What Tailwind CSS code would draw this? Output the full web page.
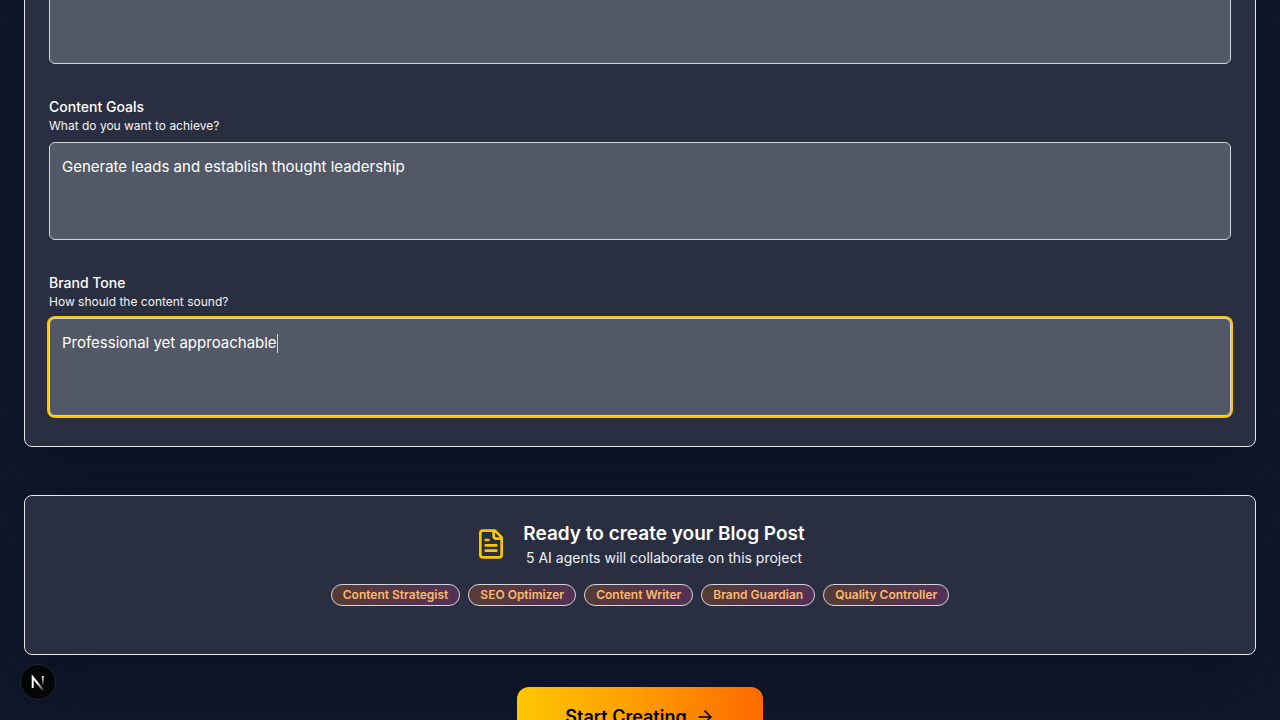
<!DOCTYPE html>
<html lang="en">
<head>
<meta charset="utf-8">
<meta name="viewport" content="width=device-width, initial-scale=1">
<title>Create content</title>
<script src="https://cdn.jsdelivr.net/npm/@tailwindcss/browser@4"></script>
</head>
<body class="bg-[#0e182a] font-['Inter',sans-serif] text-white">
<div class="relative h-screen overflow-hidden">
  <main class="-mt-16 px-6">
    <section class="flex flex-col gap-8 rounded-lg border border-gray-200 bg-[#292e40] px-6 pt-[29px] pb-[30px] shadow-2xl shadow-[#0d1024]" aria-label="Content details">
      <textarea aria-label="Target Audience" class="block h-[98px] w-full resize-none rounded-md border border-gray-300 bg-[#525865] px-3 py-3 text-base outline-none"></textarea>
      <div class="flex flex-col">
        <label for="goals" class="text-sm font-medium leading-[22px]">Content Goals</label>
        <p class="mb-2 text-xs leading-4 text-gray-100">What do you want to achieve?</p>
        <textarea id="goals" class="block h-[98px] w-full resize-none rounded-md border border-gray-300 bg-[#525865] px-3 py-3 text-[15px] leading-6 outline-none">Generate leads and establish thought leadership</textarea>
      </div>
      <div class="flex flex-col">
        <label for="tone" class="text-sm font-medium leading-[22px]">Brand Tone</label>
        <p class="mb-2 text-xs leading-4 text-gray-100">How should the content sound?</p>
        <div class="relative">
          <textarea id="tone" class="block h-[98px] w-full resize-none rounded-md border border-gray-300 bg-[#525865] px-3 py-3 text-[15px] leading-6 caret-transparent ring-2 ring-[#fdc700] outline-none">Professional yet approachable</textarea>
          <div class="pointer-events-none absolute top-[13px] left-[13px] flex h-6 items-center text-[15px] leading-6" aria-hidden="true"><span class="invisible">Professional yet approachable</span><span class="h-[19px] w-px bg-gray-300"></span></div>
        </div>
      </div>
    </section>

    <section class="mt-12 rounded-lg border border-gray-200 bg-[#292e40] px-6 pt-6 pb-12 shadow-2xl shadow-[#0d1024]">
      <div class="flex items-center justify-center gap-4">
        <svg class="size-8 text-[#fdc700]" viewBox="0 0 24 24" fill="none" stroke="currentColor" stroke-width="2" stroke-linecap="round" stroke-linejoin="round" aria-hidden="true"><path d="M15 2H6a2 2 0 0 0-2 2v16a2 2 0 0 0 2 2h12a2 2 0 0 0 2-2V7Z"/><path d="M14 2v4a2 2 0 0 0 2 2h4"/><path d="M10 9H8"/><path d="M16 13H8"/><path d="M16 17H8"/></svg>
        <div class="text-center">
          <h2 class="text-[19px] font-semibold leading-7">Ready to create your Blog Post</h2>
          <p class="text-sm leading-5 text-gray-100">5 AI agents will collaborate on this project</p>
        </div>
      </div>
      <ul class="mt-4 flex flex-wrap justify-center gap-2 text-xs font-semibold leading-4 text-[#ffb86a]">
        <li class="rounded-full border border-gray-300 bg-linear-to-r from-[#573b36] to-[#533156] px-[11px] py-0.5">Content Strategist</li>
        <li class="rounded-full border border-gray-300 bg-linear-to-r from-[#573b36] to-[#533156] px-[11px] py-0.5">SEO Optimizer</li>
        <li class="rounded-full border border-gray-300 bg-linear-to-r from-[#573b36] to-[#533156] px-[11px] py-0.5">Content Writer</li>
        <li class="rounded-full border border-gray-300 bg-linear-to-r from-[#573b36] to-[#533156] px-[11px] py-0.5">Brand Guardian</li>
        <li class="rounded-full border border-gray-300 bg-linear-to-r from-[#573b36] to-[#533156] px-[11px] py-0.5">Quality Controller</li>
      </ul>
    </section>

    <div class="mt-8 flex justify-center">
      <button type="button" class="flex h-15 items-center gap-2 rounded-xl bg-linear-to-r from-[#fdc700] to-[#ff6900] px-12 text-lg font-semibold text-black">Start Creating
        <svg class="size-5" viewBox="0 0 24 24" fill="none" stroke="currentColor" stroke-width="2" stroke-linecap="round" stroke-linejoin="round" aria-hidden="true"><path d="M5 12h14"/><path d="m12 5 7 7-7 7"/></svg>
      </button>
    </div>
  </main>

  <button type="button" aria-label="Open Next.js Dev Tools" class="absolute bottom-5 left-5 flex size-9 items-center justify-center rounded-full border border-[#252628] bg-[#040507]">
    <svg class="size-9 shrink-0" viewBox="0 0 36 36" fill="none" aria-hidden="true">
      <defs>
        <linearGradient id="stem" x1="0" y1="12" x2="0" y2="22" gradientUnits="userSpaceOnUse"><stop stop-color="#fff"/><stop offset="1" stop-color="#fff" stop-opacity="0"/></linearGradient>
        <linearGradient id="diag" x1="18" y1="18" x2="24" y2="25" gradientUnits="userSpaceOnUse"><stop stop-color="#fff"/><stop offset="1" stop-color="#fff" stop-opacity="0.2"/></linearGradient>
      </defs>
      <path d="M12.700 24V13.200L23 26" stroke="url(#diag)" stroke-width="2"/>
      <path d="M22.800 12V21" stroke="url(#stem)" stroke-width="1.800"/>
    </svg>
  </button>
</div>
<script>
  const tone = document.getElementById('tone');
  tone.focus({ preventScroll: true });
  tone.setSelectionRange(tone.value.length, tone.value.length);
</script>
</body>
</html>
